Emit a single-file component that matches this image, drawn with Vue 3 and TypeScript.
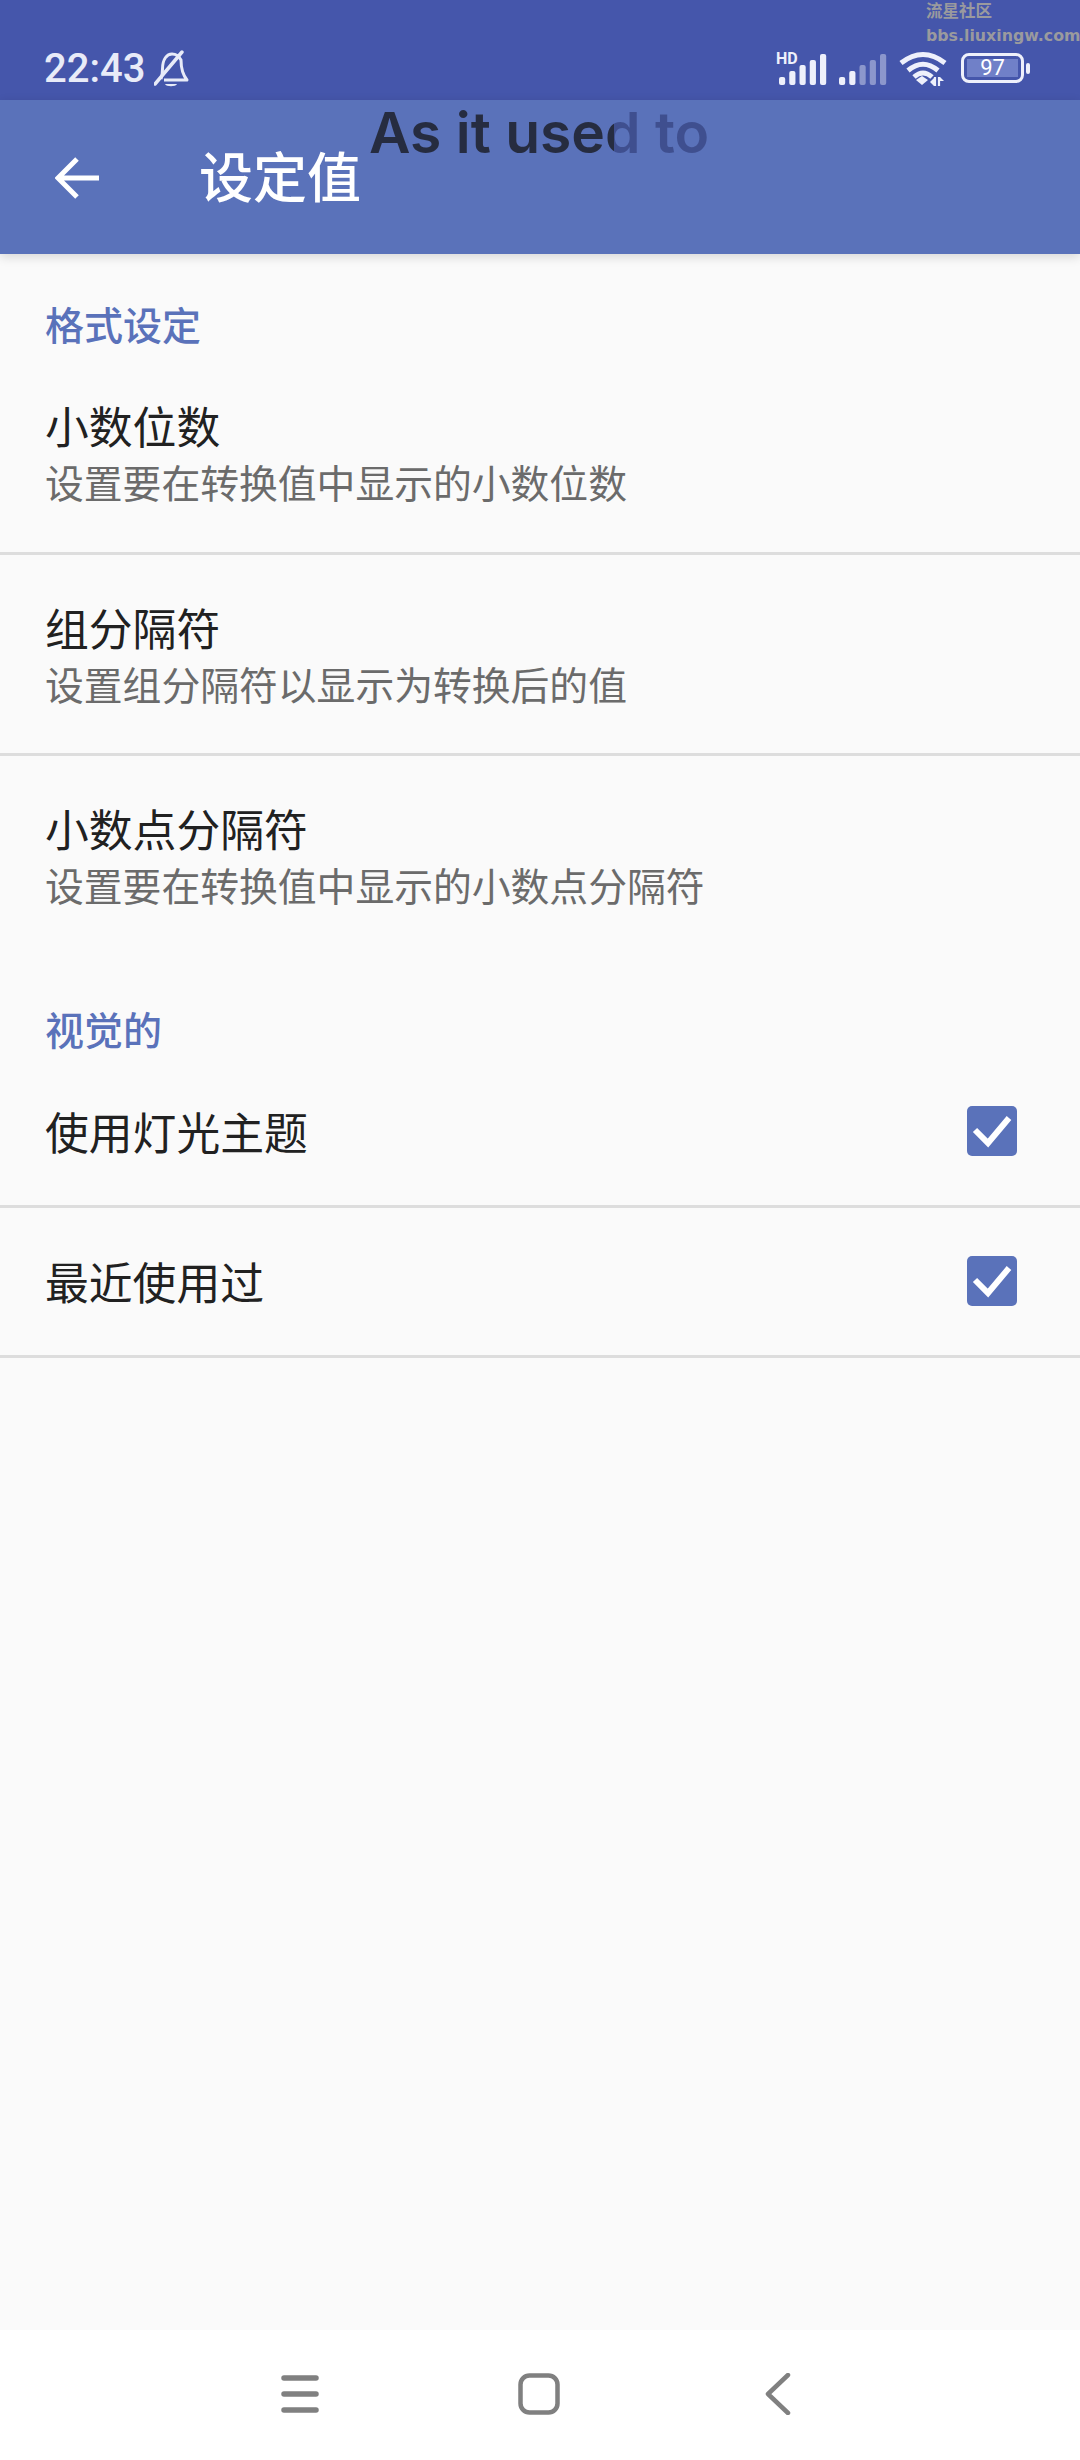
<script setup lang="ts">
interface Pref {
  title: string;
  sub: string;
}

const formatPrefs: Pref[] = [
  { title: '小数位数', sub: '设置要在转换值中显示的小数位数' },
  { title: '组分隔符', sub: '设置组分隔符以显示为转换后的值' },
  { title: '小数点分隔符', sub: '设置要在转换值中显示的小数点分隔符' },
];

const visualPrefs: string[] = ['使用灯光主题', '最近使用过'];

const barX = [0, 10.25, 20.5, 30.75, 41];
const barH = [8, 14, 20, 25, 31];
</script>

<template>
  <div class="screen">
    <div class="statusbar">
      <div class="status-left">
        <span class="clock">22:43</span>
        <svg class="bell" viewBox="0 0 36 38" width="36" height="38" fill="none" stroke="#e8ebf8" stroke-width="3">
          <path d="M7 29c1-3 1.500-6 1.500-10C8.500 9 13 4 18 4c4 0 7 2 9 6 0 10 2 15 6 20H10" stroke-linejoin="round" />
          <path d="M1 34L28 2" stroke-linecap="round" stroke-width="3.500" />
          <path d="M11 34h12c-1 3-11 3-12 0z" fill="#e8ebf8" stroke="none" />
        </svg>
      </div>
      <div class="status-right">
        <svg class="signal" viewBox="0 0 48 34" width="48" height="34">
          <rect v-for="(x, i) in barX" :key="i" :x="x" :y="32 - barH[i]" width="6.200" :height="barH[i]" rx="2" fill="#eef0fb" />
          <text x="-3" y="10.500" class="hd">HD</text>
        </svg>
        <svg class="signal sig2" viewBox="0 0 48 34" width="48" height="34">
          <rect v-for="(x, i) in barX" :key="i" :x="x" :y="32 - barH[i]" width="6.200" :height="barH[i]" rx="2" fill="#eef0fb" :opacity="i < 2 ? 1 : 0.42" />
        </svg>
        <svg class="wifi" viewBox="0 0 50 34" width="50" height="34" fill="none" stroke="#eef0fb" stroke-width="5">
          <path d="M3 10Q25-7 47 10" />
          <path d="M10 17.500Q25 5 40 17.500" />
          <path d="M16 24Q25 16 34 24" />
          <path d="M18 27l6-4 6 4-6 5z" fill="#eef0fb" stroke="none" />
          <path d="M37 24v9M41 24v9" stroke-width="2.200" />
          <path d="M32 29l4-4v8zM46 28l-4-4v4z" fill="#eef0fb" stroke="none" />
        </svg>
        <div class="battery">
          <div class="battery-body">
            <span class="battery-fill">97</span>
          </div>
          <div class="battery-nib"></div>
        </div>
      </div>
    </div>

    <header class="toolbar">
      <svg class="back" viewBox="0 0 44 44" width="44" height="44" fill="none" stroke="#fff" stroke-width="5">
        <path d="M44 22H3M22 3L3 22l19 19" />
      </svg>
      <h1 class="title">设定值</h1>
    </header>

    <main class="content">
      <div class="section-head first">格式设定</div>
      <div
        v-for="(p, i) in formatPrefs"
        :key="p.title"
        class="pref"
        :class="{ top: i === 0, last: i === formatPrefs.length - 1 }"
      >
        <div class="pref-title">{{ p.title }}</div>
        <div class="pref-sub">{{ p.sub }}</div>
      </div>

      <div class="section-head">视觉的</div>
      <div v-for="t in visualPrefs" :key="t" class="pref-check">
        <span class="pref-title">{{ t }}</span>
        <svg class="checkbox" viewBox="0 0 50 50" width="50" height="50">
          <rect width="50" height="50" rx="5" fill="#5a72ba" />
          <path d="M8 24l13 13L42 12" fill="none" stroke="#fff" stroke-width="6" />
        </svg>
      </div>
    </main>

    <nav class="navbar">
      <svg viewBox="0 0 38 38" width="38" height="38" fill="none" stroke="#808080" stroke-width="5.500" stroke-linecap="round">
        <path d="M3 3h32M3 19h32M3 35h32" />
      </svg>
      <svg class="home" viewBox="0 0 42 42" width="42" height="42" fill="none" stroke="#808080" stroke-width="4.500">
        <rect x="2.500" y="2.500" width="37" height="37" rx="9" />
      </svg>
      <svg viewBox="0 0 26 42" width="26" height="42" fill="none" stroke="#808080" stroke-width="4.500" stroke-linecap="round" stroke-linejoin="round">
        <path d="M23 2L3 21l20 19" />
      </svg>
    </nav>

    <div class="overlay-text">As it used to</div>
    <div class="watermark">
      <div class="wm-cn">流星社区</div>
      <div class="wm-url">bbs.liuxingw.com</div>
    </div>
  </div>
</template>

<style>
html,
body {
  margin: 0;
  background: #fafafa;
}
</style>

<style scoped>
.screen {
  position: relative;
  width: 1080px;
  height: 2460px;
  display: flex;
  flex-direction: column;
  overflow: hidden;
  background: #fafafa;
  font-family: "Noto Sans CJK SC", "Noto Sans", sans-serif;
}

.statusbar {
  height: 100px;
  flex: none;
  box-sizing: border-box;
  background: #4556ab;
  display: flex;
  justify-content: space-between;
  align-items: flex-start;
  padding: 50px 50px 0 44px;
}

.status-left {
  display: flex;
  align-items: center;
  gap: 9px;
}

.clock {
  font-family: Roboto, sans-serif;
  font-size: 40px;
  line-height: 38px;
  font-weight: 500;
  color: #e8ebf8;
}

.status-right {
  display: flex;
  align-items: flex-start;
  padding-top: 3px;
}

.signal {
  overflow: visible;
  margin-right: 12px;
}

.sig2 {
  margin-right: 13px;
}

.hd {
  font-family: Roboto, sans-serif;
  font-size: 16px;
  font-weight: 700;
  fill: #eef0fb;
}

.wifi {
  overflow: visible;
  margin-left: -2px;
  margin-right: 13px;
}

.battery {
  display: flex;
  align-items: center;
}

.battery-body {
  width: 63px;
  height: 30px;
  box-sizing: border-box;
  border: 3px solid #eef0fb;
  border-radius: 8px;
  padding: 3px;
  display: flex;
}

.battery-fill {
  flex: 1;
  background: #7080c8;
  color: #fff;
  font-family: Roboto, sans-serif;
  font-size: 22px;
  line-height: 18px;
  text-align: center;
}

.battery-nib {
  width: 4px;
  height: 11px;
  margin-left: 2px;
  border-radius: 2px;
  background: #eef0fb;
}

.toolbar {
  height: 154px;
  flex: none;
  background: #5a72ba;
  display: flex;
  align-items: center;
  box-shadow: 0 3px 10px rgba(0, 0, 0, 0.14);
  z-index: 1;
  padding-left: 55px;
}

.back {
  margin-top: 2px;
}

.title {
  margin: 0 0 0 100px;
  font-size: 54px;
  line-height: 72px;
  font-weight: 500;
  color: #fff;
  padding-bottom: 4px;
}

.content {
  flex: 1;
}

.section-head {
  padding: 60px 45px 4px;
  font-size: 39px;
  line-height: 50px;
  font-weight: 500;
  color: #5a72ba;
}

.section-head.first {
  padding: 44px 45px 2px;
}

.pref {
  padding: 44px 45px 42px;
  border-bottom: 3px solid #dddddd;
}

.pref.top {
  padding-top: 47px;
  padding-bottom: 43px;
}

.pref.last {
  border-bottom: none;
  padding-bottom: 31px;
}

.pref-title {
  font-size: 43.800px;
  line-height: 56px;
  color: #212121;
}

.pref-sub {
  font-size: 38.800px;
  line-height: 56px;
  color: #6b6b6b;
}

.pref-check {
  height: 147.500px;
  padding: 0 63px 0 45px;
  display: flex;
  align-items: center;
  justify-content: space-between;
  border-bottom: 3px solid #dddddd;
}

.navbar {
  height: 130px;
  flex: none;
  background: #fff;
  display: flex;
  align-items: center;
  justify-content: space-between;
  box-sizing: border-box;
  padding: 0 289px 2px 281px;
}

.home {
  margin-right: 6px;
}

.overlay-text {
  position: absolute;
  left: 369px;
  top: 94px;
  font-family: Inter, sans-serif;
  font-size: 57px;
  line-height: 78px;
  font-weight: 600;
  white-space: nowrap;
  z-index: 2;
  background: linear-gradient(90deg, #262c40 0, #262c40 245px, #3f4f8f 245px);
  -webkit-background-clip: text;
  background-clip: text;
  color: transparent;
}

.watermark {
  position: absolute;
  right: 1px;
  top: 0;
  width: 153px;
  z-index: 2;
  color: #9a9a9e;
  font-weight: 700;
}

.wm-cn {
  font-size: 16.500px;
  line-height: 20px;
}

.wm-url {
  margin-top: 6px;
  font-family: "DejaVu Sans", sans-serif;
  font-size: 15.800px;
  line-height: 20px;
  white-space: nowrap;
}
</style>
